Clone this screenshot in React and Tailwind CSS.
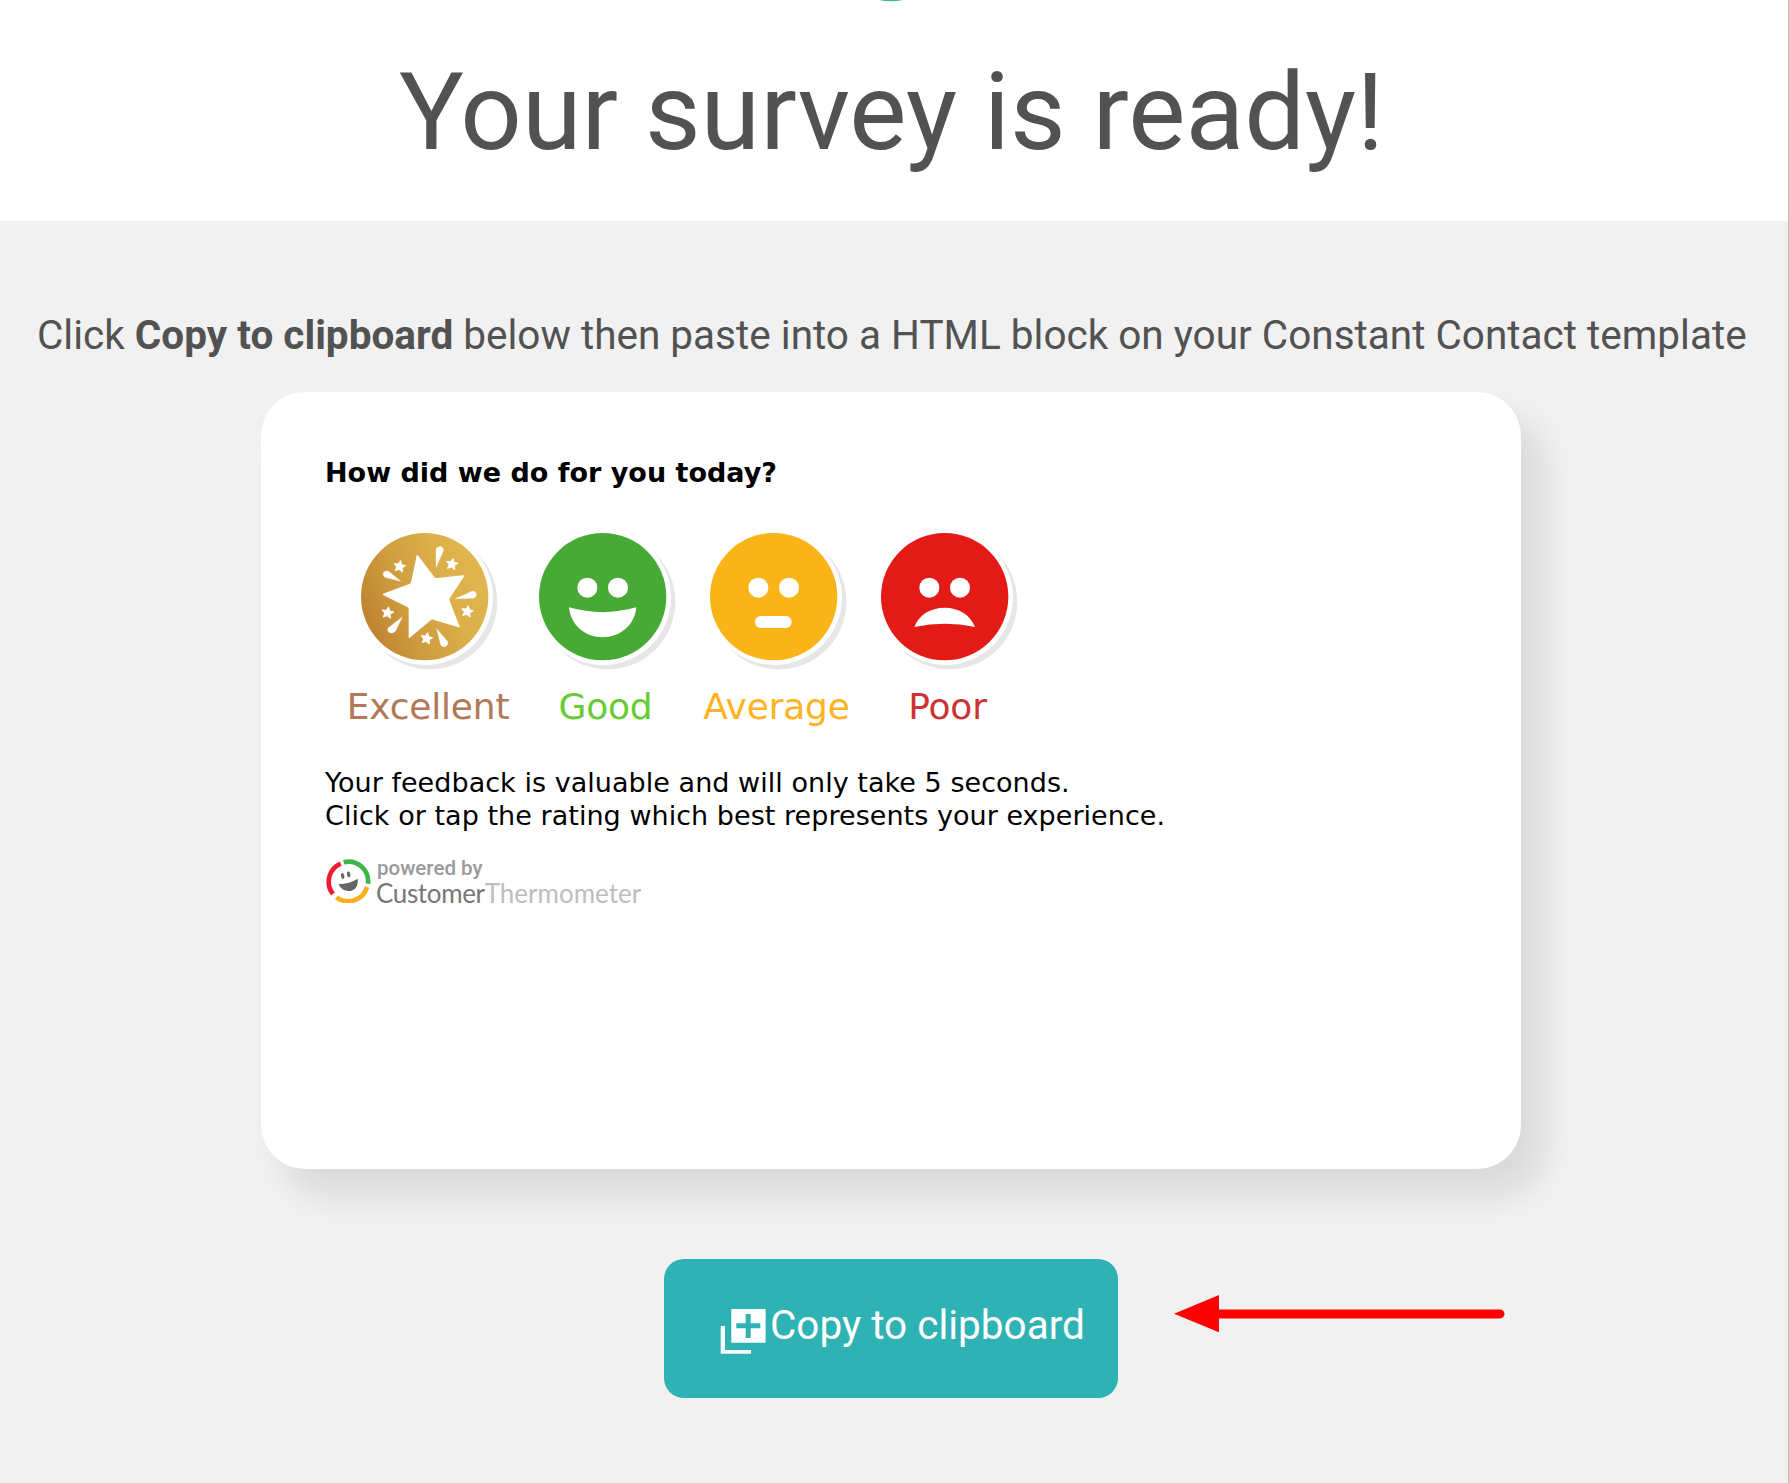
const RATINGS = [
  { label: 'Excellent', icon: StarIcon, width: 'w-[184px]', text: 'text-[#b27858]' },
  { label: 'Good', icon: GoodIcon, width: 'w-[171px]', text: 'text-[#66cc33]' },
  { label: 'Average', icon: AverageIcon, width: 'w-[171px]', text: 'text-[#ffb31f]' },
  { label: 'Poor', icon: PoorIcon, width: 'w-[171px]', text: 'text-[#cc3333]' },
];

// round badge with a grey crescent at the lower right
function Badge({ fill, children }) {
  return (
    <svg viewBox="-200 -200 432 432" className="h-36 w-36">
      <circle cx="15" cy="15" r="203" fill="#e6e6e6" />
      <circle cx="2" cy="2" r="203" fill="#fff" />
      <circle r="191" fill={fill} />
      {children}
    </svg>
  );
}

function Eyes() {
  return (
    <g fill="#fff">
      <circle cx="-46" cy="-27" r="30" />
      <circle cx="46" cy="-27" r="30" />
    </g>
  );
}

function GoodIcon() {
  return (
    <Badge fill="#46aa35">
      <Eyes />
      <path d="M-101 32Q0 61 101 32C96 86 52 122 0 122S-96 86-101 32Z" fill="#fff" />
    </Badge>
  );
}

function AverageIcon() {
  return (
    <Badge fill="#f9b418">
      <Eyes />
      <rect x="-56" y="58" width="110" height="36" rx="17" fill="#fff" />
    </Badge>
  );
}

function PoorIcon() {
  return (
    <Badge fill="#e31b17">
      <Eyes />
      <path d="M-91 91C-78 56-44 33 0 33S78 56 91 91Q0 71-91 91Z" fill="#fff" />
    </Badge>
  );
}

const SPARKS = [
  [-75, -91],
  [82, -98],
  [128, 44],
  [6, 125],
  [-111, 48],
];

function StarIcon() {
  return (
    <Badge fill="url(#gold)">
      <defs>
        <linearGradient id="gold" x1="0" y1="0.7" x2="1" y2="0.3">
          <stop offset="0" stopColor="#bc812f" />
          <stop offset="0.35" stopColor="#cf9d3f" />
          <stop offset="0.7" stopColor="#dcb04a" />
          <stop offset="1" stopColor="#e1b74e" />
        </linearGradient>
      </defs>
      <g fill="#fff" stroke="#fff" strokeLinejoin="round">
        <path
          d="M-22-123L28-57Q31-53 36-54L117-62L74 3Q71 8 73 13L103 90L26 67Q21 65 17 69L-46 122L-46 38Q-46 33-50 30L-124-7L-46-36Q-41-38-39-43Z"
          strokeWidth="4"
        />
        {SPARKS.map(([x, y]) => (
          <path
            key={x}
            transform={`translate(${x} ${y}) rotate(10)`}
            d="M0-17L5-6L17-5L8 3L11 15L0 9L-11 15L-8 3L-17-5L-5-6Z"
            strokeWidth="3"
          />
        ))}
        <g strokeWidth="1">
          <path d="M34-88L34-140C36-156 58-153 56-137Z" />
          <path d="M92 6L142-16C157-19 160 1 146 5Z" />
          <path d="M36 96L68 134C74 148 56 157 48 144Z" />
          <path d="M-67 61L-87 102C-97 117-117 106-109 93Z" />
          <path d="M-72-46L-108-76C-123-82-130-66-119-58Z" />
        </g>
      </g>
    </Badge>
  );
}

function ThermometerLogo() {
  return (
    <svg viewBox="45 55 138 132" className="mt-px h-11 w-[46px]">
      <g fill="none" strokeWidth="14">
        <path d="M92 69A59 59 0 0 0 69 160" stroke="#ee1c2e" />
        <path d="M101 65A59 59 0 0 1 174 129" stroke="#3fb549" />
        <path d="M171 139A59 59 0 0 1 79 170" stroke="#fcaf1b" />
      </g>
      <g fill="#666">
        <path d="M86 130Q118 130 143 114C146 138 133 151 117 151C103 151 91 144 86 130Z" />
        <ellipse cx="98" cy="106" rx="5" ry="9" transform="rotate(-12 98 106)" />
        <ellipse cx="116" cy="101" rx="5" ry="9" transform="rotate(-12 116 101)" />
      </g>
    </svg>
  );
}

function CopyIcon() {
  return (
    <svg viewBox="0 0 46 46" className="mt-[49px] h-[46px] w-[46px]" fill="currentColor">
      <path
        fillRule="evenodd"
        d="M11.3 1H45.6V34.7H11.3ZM25.7 6V15.3H16.3V20.3H25.7V30H30.7V20.3H40.3V15.3H30.7V6Z"
      />
      <path d="M.7 18H5V42H31V45.7H.7Z" />
    </svg>
  );
}

export default function App() {
  return (
    <div className="h-[1483px] w-[1789px] overflow-hidden border-r border-[#bdbdbd] bg-[#f1f1f1] font-[Roboto,sans-serif] text-[#525252]">
      <header className="flex h-[221px] flex-col items-center bg-white">
        <svg viewBox="0 0 26 2" className="ml-[-6px] h-0.5 w-[26px]">
          <circle cx="13" cy="-59" r="60.2" fill="#3dba80" />
        </svg>
        <h1 className="mt-[47px] ml-[-5px] text-[108px] leading-[126px] whitespace-nowrap">Your survey is ready!</h1>
      </header>

      <p className="mt-[90px] ml-[37px] text-[40.5px] leading-[48px] whitespace-nowrap">
        Click <b className="font-bold">Copy to clipboard</b> below then paste into a HTML block on your Constant Contact template
      </p>

      <div className="mt-[33px] ml-[261px] h-[777px] w-[1260px] rounded-[44px] bg-white pt-[64px] pl-[64px] font-['DejaVu_Sans',sans-serif] text-[27px] leading-[33px] text-black shadow-[22px_26px_36px_rgba(0,0,0,0.1)]">
        <p className="font-bold whitespace-nowrap">How did we do for you today?</p>

        <div className="mt-[41px] ml-[13px] flex">
          {RATINGS.map(({ label, icon: Icon, width, text }) => (
            <div key={label} className={`flex flex-none flex-col items-center ${width}`}>
              <Icon />
              <span className={`mt-[12px] ml-[-4px] text-[36px] leading-[42px] tracking-[-0.2px] whitespace-nowrap ${text}`}>
                {label}
              </span>
            </div>
          ))}
        </div>

        <p className="mt-[38px] tracking-[0.04px] whitespace-nowrap">
          Your feedback is valuable and will only take 5 seconds.
          <br />
          Click or tap the rating which best represents your experience.
        </p>

        <div className="mt-[26px] flex">
          <ThermometerLogo />
          <div className="ml-[5px] whitespace-nowrap">
            <p className="pl-px font-[Roboto,sans-serif] text-[20.5px] leading-[20px] font-medium text-[#999]">powered by</p>
            <p className="font-[Lato,sans-serif] text-[26px] leading-[30px] text-[#bdbdbd]">
              <span className="tracking-[-0.35px] text-[#777]">Customer</span>Thermometer
            </p>
          </div>
        </div>
      </div>

      <div className="mt-[90px] ml-[664px] flex items-start">
        <button className="flex h-[139px] w-[454px] rounded-[20px] bg-[#2fb2b4] pl-[56px] text-[40.5px] leading-[48px] text-white">
          <CopyIcon />
          <span className="mt-[42px] ml-[4px] whitespace-nowrap">Copy to clipboard</span>
        </button>
        <svg viewBox="0 0 331 38" className="mt-[36px] ml-[56px] h-[38px] w-[331px]">
          <path d="M0 18.7L45 0V37.3Z" fill="#f00" />
          <path d="M44 18.9H326" stroke="#f00" strokeWidth="9" strokeLinecap="round" />
        </svg>
      </div>
    </div>
  );
}
